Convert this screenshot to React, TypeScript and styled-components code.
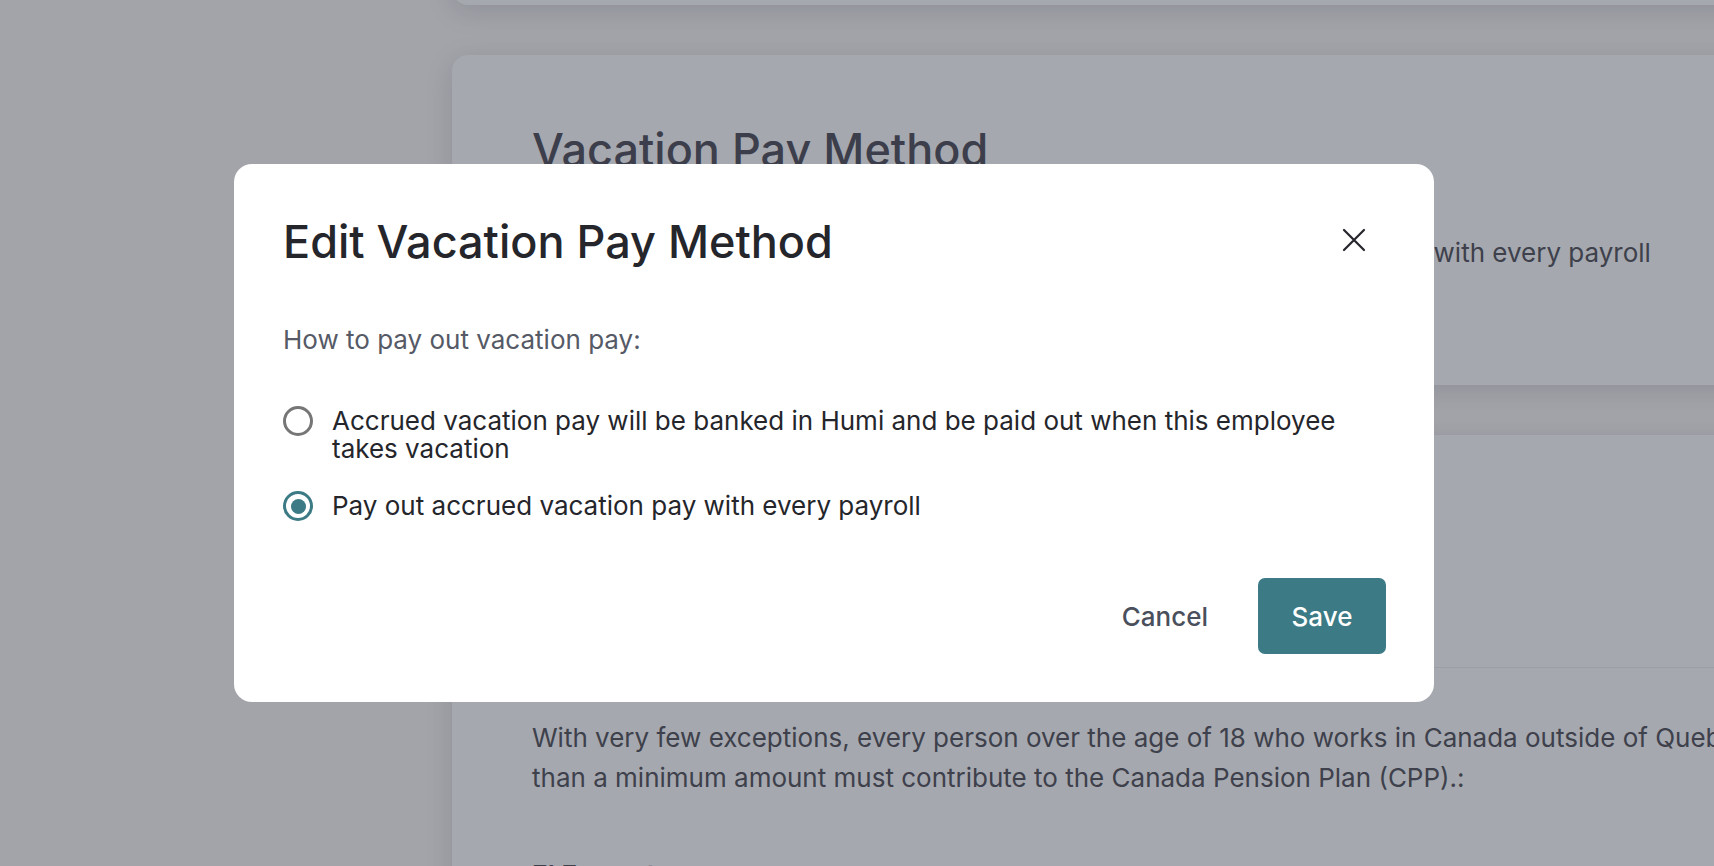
import React from "react";
import styled, { createGlobalStyle } from "styled-components";

const GlobalStyle = createGlobalStyle`
  html, body {
    margin: 0;
    padding: 0;
    height: 100%;
    overflow: hidden;
    background: #f9f8f6;
    font-family: Inter, "Noto Sans", "Liberation Sans", sans-serif;
    color: #4d4e53;
  }
  * { box-sizing: border-box; }
`;

const Page = styled.div`
  display: flex;
  height: 866px;
  padding-left: 452px;
  overflow: hidden;
`;

const Column = styled.main`
  display: flex;
  flex-direction: column;
  gap: 50px;
  margin-top: -195px;
`;

const Card = styled.section<{ $h: number }>`
  width: 1420px;
  height: ${(p) => p.$h}px;
  flex-shrink: 0;
  background: #ffffff;
  border-radius: 16px;
  box-shadow: 0 6px 28px rgba(20, 24, 40, 0.14);
  padding: 0 80px;
  display: flex;
  flex-direction: column;
`;

const CardTitle = styled.h2`
  margin: 68px 0 0;
  font-size: 45px;
  line-height: 54px;
  font-weight: 500;
  color: #4c4d55;
`;

const InfoRow = styled.div`
  display: grid;
  grid-template-columns: 530px 1fr;
  margin-top: 60px;
  font-size: 26px;
  line-height: 32px;
  color: #4e4f56;
`;

const Divider = styled.hr`
  border: none;
  border-top: 1px solid #eceef1;
  margin: 232px -80px 0;
`;

const Paragraph = styled.p`
  margin: 50px 0 0;
  font-size: 26px;
  line-height: 40px;
  color: #4e4f56;
  white-space: nowrap;
`;

const SubHeading = styled.h3`
  margin: 61px 0 0;
  font-size: 26px;
  line-height: 32px;
  font-weight: 600;
  color: #4e4f56;
`;

const Overlay = styled.div`
  position: fixed;
  inset: 0;
  background: rgba(40, 44, 60, 0.41);
  display: flex;
  align-items: center;
  justify-content: center;
  padding-right: 46px;
`;

const Modal = styled.div`
  width: 1200px;
  height: 538px;
  background: #ffffff;
  border-radius: 18px;
  padding: 42px 48px 48px 49px;
  display: flex;
  flex-direction: column;
`;

const ModalHeader = styled.div`
  display: flex;
  align-items: center;
  justify-content: space-between;
  height: 70px;
`;

const ModalTitle = styled.h1`
  margin: 0;
  font-size: 45px;
  font-weight: 500;
  color: #25262b;
`;

const CloseButton = styled.button`
  border: none;
  background: none;
  padding: 8px;
  margin-right: 12px;
  margin-top: -2px;
  display: flex;
  cursor: pointer;
  color: #25262b;
`;

const Prompt = styled.p`
  margin: 48px 0 0;
  font-size: 26px;
  line-height: 32px;
  color: #555a66;
`;

const Options = styled.div`
  display: flex;
  flex-direction: column;
  gap: 29px;
  margin-top: 51px;
`;

const Option = styled.label`
  display: flex;
  align-items: flex-start;
  gap: 19px;
  font-size: 26px;
  line-height: 28px;
  color: #25262b;
  cursor: pointer;
`;

const Radio = styled.span<{ $checked: boolean }>`
  flex-shrink: 0;
  width: 30px;
  height: 30px;
  margin-top: -1px;
  border-radius: 50%;
  border: 3px solid ${(p) => (p.$checked ? "#3c7a85" : "#767676")};
  display: flex;
  align-items: center;
  justify-content: center;
  &::after {
    content: "";
    width: 15px;
    height: 15px;
    border-radius: 50%;
    background: ${(p) => (p.$checked ? "#3c7a85" : "transparent")};
  }
`;

const Footer = styled.div`
  margin-top: auto;
  display: flex;
  justify-content: flex-end;
  align-items: center;
  gap: 26px;
`;

const Button = styled.button<{ $primary?: boolean }>`
  height: 76px;
  padding: 0 ${(p) => (p.$primary ? "30px" : "24px")};
  min-width: ${(p) => (p.$primary ? "128px" : "0")};
  border: none;
  border-radius: 7px;
  font-family: inherit;
  font-size: 26px;
  font-weight: 500;
  background: ${(p) => (p.$primary ? "#3c7a85" : "transparent")};
  color: ${(p) => (p.$primary ? "#ffffff" : "#4a4f5c")};
  cursor: pointer;
`;

const CloseIcon = () => (
  <svg width="24" height="24" viewBox="0 0 24 24" fill="none">
    <path d="M2 2L22 22M22 2L2 22" stroke="currentColor" strokeWidth="2.2" strokeLinecap="round" />
  </svg>
);

export default function App() {
  return (
    <>
      <GlobalStyle />
      <Page>
        <Column>
          <Card $h={200} />
          <Card $h={330}>
            <CardTitle>Vacation Pay Method</CardTitle>
            <InfoRow>
              <span>Vacation pay method</span>
              <span>Pay out accrued vacation pay with every payroll</span>
            </InfoRow>
          </Card>
          <Card $h={700}>
            <Divider />
            <Paragraph>
              With very few exceptions, every person over the age of 18 who works in Canada outside of Quebec and earns more
              <br />
              than a minimum amount must contribute to the Canada Pension Plan (CPP).:
            </Paragraph>
            <SubHeading>EI Exempt</SubHeading>
          </Card>
        </Column>
      </Page>
      <Overlay>
        <Modal role="dialog" aria-modal="true">
          <ModalHeader>
            <ModalTitle>Edit Vacation Pay Method</ModalTitle>
            <CloseButton aria-label="Close">
              <CloseIcon />
            </CloseButton>
          </ModalHeader>
          <Prompt>How to pay out vacation pay:</Prompt>
          <Options>
            <Option>
              <Radio $checked={false} />
              <span>
                Accrued vacation pay will be banked in Humi and be paid out when this employee
                <br />
                takes vacation
              </span>
            </Option>
            <Option>
              <Radio $checked={true} />
              <span>Pay out accrued vacation pay with every payroll</span>
            </Option>
          </Options>
          <Footer>
            <Button>Cancel</Button>
            <Button $primary>Save</Button>
          </Footer>
        </Modal>
      </Overlay>
    </>
  );
}
